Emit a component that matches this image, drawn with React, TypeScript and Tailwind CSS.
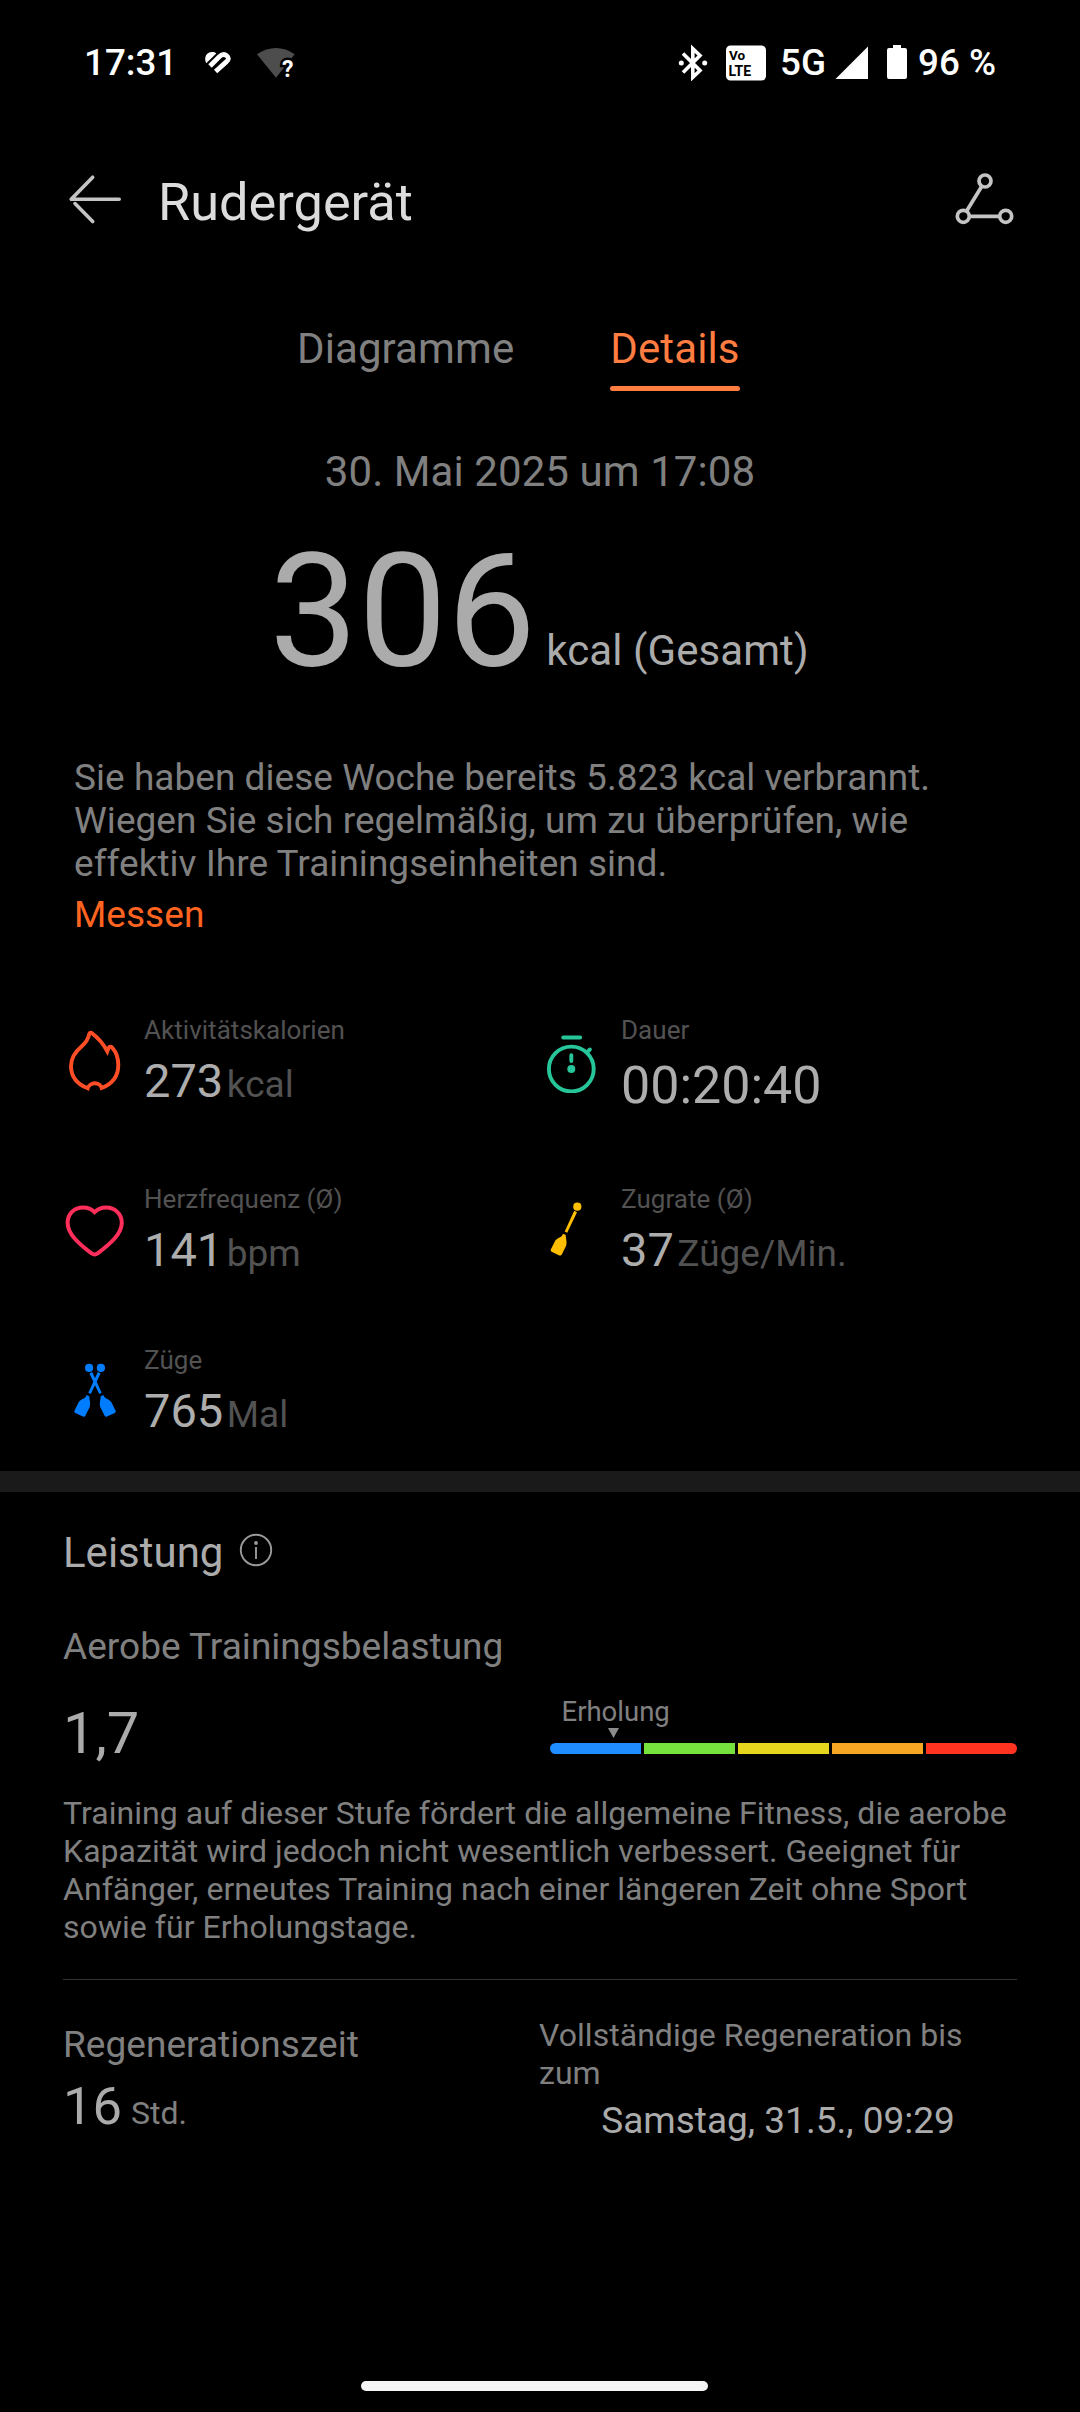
import { ReactNode, useState } from "react";

const SEGMENTS = ["bg-[#1f8cff]", "bg-[#77e13e]", "bg-[#e6d51f]", "bg-[#f7a623]", "bg-[#ff3320]"];

function StatusBar()
{
  return (
    <div className="flex h-[125px] items-center pl-[84px] pr-[82px] text-[36.75px] font-medium leading-[44px] text-white whitespace-nowrap">
      <div className="w-[92px]">17:31</div>
      <svg className="ml-[28px] h-[37px] w-[28px]" viewBox="0 0 28 37" fill="none">
        <path d="M2.2 19.3C-.6 13.6 2.6 8 8 8c1.800 0 3.100.5 4.300 1.400Z" fill="#fff" />
        <path d="M6 22 15.500 12.500Q19.500 8.800 22.800 11.800T22.500 17.600L11.600 27.500" stroke="#fff" strokeWidth="4.800" />
      </svg>
      <svg className="ml-[25px] h-[37px] w-[40px]" viewBox="0 0 40 37">
        <path d="M0 10.300Q19-2.400 37.700 10.300L19 33.700Z" fill="#4d4d4d" />
        <text x="25" y="32.500" fill="#fff" stroke="#000" strokeWidth="5" paintOrder="stroke" className="font-['Roboto'] text-[23px] font-bold">?</text>
      </svg>
      <svg className="ml-auto h-[37px] w-[30px]" viewBox="0 0 30 37" fill="none">
        <path d="M5 9.500 22 26.500 14.800 33.300V4.700L22 11.500 5 28.500" stroke="#fff" strokeWidth="3.600" />
        <circle cx="3.300" cy="19" r="2.500" fill="#fff" />
        <circle cx="26.700" cy="19" r="2.500" fill="#fff" />
      </svg>
      <svg className="ml-[17px] h-[37px] w-[42px]" viewBox="0 0 42 37">
        <rect x="1" y="1.500" width="40" height="35" rx="4.500" fill="#fff" />
        <text x="4" y="16.300" className="font-['Roboto'] text-[13.500px] font-bold">Vo</text>
        <text x="3.500" y="31.500" className="font-['Roboto'] text-[14px] font-bold">LTE</text>
      </svg>
      <div className="ml-[13px] w-[46px]">5G</div>
      <svg className="ml-[9px] h-[37px] w-[34px]" viewBox="0 0 34 37">
        <path d="M.5 35 33 2.500V35Z" fill="#fff" />
      </svg>
      <svg className="ml-[17px] h-[37px] w-[22px]" viewBox="0 0 22 37">
        <path d="M7 1h8v3h4q2 0 2 2v27q0 2-2 2H3q-2 0-2-2V6q0-2 2-2h4Z" fill="#fff" />
      </svg>
      <div className="ml-[10px] w-[80px]">96 %</div>
    </div>
  );
}

function Header()
{
  return (
    <div className="flex h-[155px] items-center pl-[68px] pr-[66px]">
      <svg className="mb-[7px] h-[52px] w-[55px]" viewBox="0 0 55 52" fill="none" stroke="#c4c4c4" strokeWidth="3.600" strokeLinecap="round">
        <path d="M24.700 4.200 3.200 26.300H51.200M24.700 48.500 7 30.600" strokeLinejoin="round" />
      </svg>
      <h1 className="mb-[2px] ml-[35px] text-[52.3px] leading-[62px] text-[#dcdcdc]">Rudergerät</h1>
      <svg className="mb-[7px] ml-auto h-[56px] w-[60px]" viewBox="0 0 60 56" fill="none" stroke="#c4c4c4" strokeWidth="3.700">
        <circle cx="31" cy="10" r="6" />
        <circle cx="9.300" cy="45.300" r="6" />
        <circle cx="51.700" cy="45.300" r="6" />
        <path d="M27.800 15.200 12.500 40.200M15.300 45.300H45.700" />
      </svg>
    </div>
  );
}

function FlameIcon()
{
  return (
    <path d="M29 3.200C27.500 2.200 26.500 3 26.200 4.200C25 10 22 13.500 18.500 16.500C12 22 8 28.500 8 36C8 47 15 54.500 24.700 58.300C25.500 55.500 28.500 53.300 31.800 53.300S38 55.500 38.700 58C49 54 55.300 46 55.300 35C55.300 28 53 22 49.500 18C48.500 16.500 46.500 16.300 45.500 18L44.300 21.300C41 15 36 8.500 29 3.200Z"
      fill="none" stroke="#ff4e26" strokeWidth="3.900" />
  );
}

function TimerIcon()
{
  return (
    <g fill="none" stroke="#26c69a" strokeWidth="3.900" strokeLinecap="round">
      <circle cx="31.300" cy="39" r="22.400" />
      <path d="M23.200 7.500H40.200M31.300 25.200V31M47.700 21.700l2.200-2.200" />
      <circle cx="31.300" cy="39" r="4" fill="#26c69a" stroke="none" />
    </g>
  );
}

function HeartIcon()
{
  return (
    <path d="M31.600 13.200C28.500 10 24 8.500 20 8.500C11 8.500 4.600 15 4.600 23.700C4.600 35 16 45 28.500 54.300Q31.600 56.800 34.700 54.300C47 45 58.800 35 58.800 23.700C58.800 15 52 8.500 43.200 8.500C39 8.500 34.700 10 31.600 13.200Z"
      fill="none" stroke="#ff2e5b" strokeWidth="4" />
  );
}

function Oar()
{
  return (
    <>
      <circle cx="37.300" cy="7.700" r="4.100" />
      <path d="M34.200 11.800 37 13.200 27.200 33.800 24.700 32.600Z" />
      <path d="M23 34.800L25.800 36C25.500 39.500 27.500 42.500 26 47L21.800 55.600Q21 57 19.400 56.400L11.600 52.800Q10.200 52 10.800 50.600L14.800 42.500C16.500 39 20.500 38.800 22.200 36.500Z" />
    </>
  );
}

function OarsIcon()
{
  return (
    <g fill="#007dff">
      <g transform="translate(.600 .200)"><Oar /></g>
      <g transform="translate(63.400 .200) scale(-1 1)"><Oar /></g>
    </g>
  );
}

function Stat({ icon, label, value, unit }: { icon: ReactNode; label: string; value: string; unit?: string })
{
  return (
    <div className="flex items-start whitespace-nowrap">
      <svg className="mt-4 size-[63px]" viewBox="0 0 63 63">{icon}</svg>
      <div className="ml-[18px]">
        <div className="text-[26px] leading-[33px] tracking-[0.04px] text-[#525252]">{label}</div>
        <div className="mt-[6px] flex items-baseline">
          <span className={unit ? "text-[47px] leading-[56px] text-[#adadad]" : "text-[52px] leading-[66px] text-[#adadad]"}>{value}</span>
          {unit && <span className="ml-[3.5px] text-[37px] leading-[44px] text-[#525252]">{unit}</span>}
        </div>
      </div>
    </div>
  );
}

export default function App()
{
  const [tab, setTab] = useState("Details");
  return (
    <div className="flex h-[2412px] w-[1080px] flex-col overflow-hidden bg-black font-['Roboto',sans-serif]">
      <StatusBar />
      <Header />
      <div className="flex gap-[96px] pl-[297px] pt-[44px] text-[42px] leading-[50px] tracking-[0.1px]">
        {["Diagramme", "Details"].map((name) => (
          <button key={name} onClick={() => setTab(name)} className={tab === name ? "text-[#ff7d40]" : "text-[#808080]"}>
            {name}
            <div className={`mt-[12px] h-[5px] rounded-full ${tab === name ? "bg-[#ff7d40]" : ""}`} />
          </button>
        ))}
      </div>
      <div className="mt-[56px] text-center text-[42px] leading-[50px] tracking-[0.08px] text-[#808080]">30. Mai 2025 um 17:08</div>
      <div className="mt-[34px] flex h-[160px] items-baseline justify-center gap-[10.5px] pr-[2px] text-[#ababab]">
        <span className="text-[158px] leading-[160px]">306</span>
        <span className="text-[42px] leading-[50px] tracking-[0.08px]">kcal (Gesamt)</span>
      </div>
      <div className="mt-[65px] px-[74px] text-[37px] leading-[43px] tracking-[0.03px] text-[#808080] whitespace-nowrap">
        Sie haben diese Woche bereits 5.823 kcal verbrannt.<br />
        Wiegen Sie sich regelmäßig, um zu überprüfen, wie<br />
        effektiv Ihre Trainingseinheiten sind.
        <div className="mt-2 text-[#ff6420]">Messen</div>
      </div>
      <div className="mt-[78px] grid grid-cols-2 grid-rows-[169px_161px_127px] px-[63px]">
        <Stat icon={<FlameIcon />} label="Aktivitätskalorien" value="273" unit="kcal" />
        <Stat icon={<TimerIcon />} label="Dauer" value="00:20:40" />
        <Stat icon={<HeartIcon />} label="Herzfrequenz (Ø)" value="141" unit="bpm" />
        <Stat icon={<g fill="#ffbf00"><Oar /></g>} label="Zugrate (Ø)" value="37" unit="Züge/Min." />
        <Stat icon={<OarsIcon />} label="Züge" value="765" unit="Mal" />
      </div>
      <div className="h-[21px] bg-[#1a1a1a]" />
      <div className="px-[63px] pt-9 text-[#808080]">
        <div className="flex items-center">
          <h2 className="text-[42px] leading-[50px] text-[#ababab]">Leistung</h2>
          <svg className="mb-[7px] ml-[16px] size-[34px]" viewBox="0 0 34 34" fill="none" stroke="#9a9a9a" strokeWidth="1.900">
            <circle cx="17" cy="17" r="15.200" />
            <path d="M17 14V26" />
            <circle cx="17" cy="10" r="1.900" fill="#9a9a9a" stroke="none" />
          </svg>
        </div>
        <div className="mt-[47px] text-[37px] leading-[43px] tracking-[0.03px]">Aerobe Trainingsbelastung</div>
        <div className="mt-[27px] flex h-[72px] items-start justify-between">
          <div className="pt-1 text-[57.75px] leading-[68px] text-[#ababab]">1,7</div>
          <div className="w-[467px]">
            <div className="ml-[11.5px] text-[27.5px] leading-[33px]">Erholung</div>
            <svg className="ml-[58px] h-[10px] w-[11px]" viewBox="0 0 11 10">
              <path d="M0 0H11L5.500 10Z" fill="#8c8c8c" />
            </svg>
            <div className="mt-[5px] flex h-[11px] gap-[2.600px] overflow-hidden rounded-full">
              {SEGMENTS.map((color) => <div key={color} className={`flex-1 ${color}`} />)}
            </div>
          </div>
        </div>
        <p className="mt-[27px] text-[32px] leading-[38px] tracking-[0.055px] whitespace-nowrap">
          Training auf dieser Stufe fördert die allgemeine Fitness, die aerobe<br />
          Kapazität wird jedoch nicht wesentlich verbessert. Geeignet für<br />
          Anfänger, erneutes Training nach einer längeren Zeit ohne Sport<br />
          sowie für Erholungstage.
        </p>
        <div className="mt-[33px] h-px bg-[#333333]" />
        <div className="grid grid-cols-2">
          <div className="pt-[43px]">
            <div className="text-[37px] leading-[43px] tracking-[0.03px]">Regenerationszeit</div>
            <div className="mt-[9px] flex items-baseline">
              <span className="text-[52.5px] leading-[62px] text-[#ababab]">16</span>
              <span className="ml-[9px] text-[32px] leading-[38px]">Std.</span>
            </div>
          </div>
          <div className="-ml-px pt-[36px]">
            <div className="text-[32px] leading-[38px] tracking-[0.04px]">Vollständige Regeneration bis<br />zum</div>
            <div className="mt-[7px] text-center text-[37px] leading-[43px] text-[#ababab]">Samstag, 31.5., 09:29</div>
          </div>
        </div>
      </div>
      <div className="mb-[21px] ml-[361px] mt-auto h-[10px] w-[347px] rounded-full bg-[#f5f5f5]" />
    </div>
  );
}
